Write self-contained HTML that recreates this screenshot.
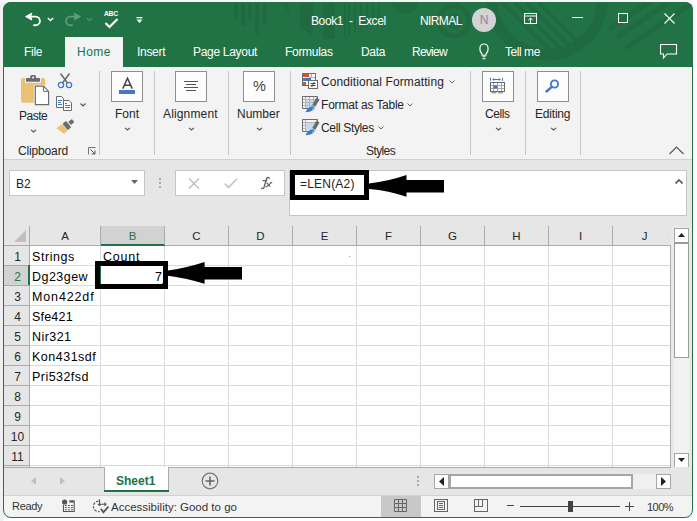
<!DOCTYPE html>
<html><head><meta charset="utf-8">
<style>
*{margin:0;padding:0;box-sizing:border-box}
html,body{width:697px;height:521px;overflow:hidden;background:#f1f1f1;font-family:"Liberation Sans",sans-serif;}
.a{position:absolute}
#win{position:absolute;left:3px;top:2px;width:690px;height:516px;border-radius:8px;overflow:hidden;background:#f3f3f3}
#wb{position:absolute;left:3px;top:2px;width:690px;height:516px;border:1px solid #217346;border-radius:8px}
#pg{position:absolute;left:-3px;top:-2px;width:697px;height:521px}
.t{position:absolute;white-space:nowrap;line-height:1}
.wt{color:#fff;font-size:12px;letter-spacing:-0.4px}
.tab{color:#fff;font-size:12px;letter-spacing:-0.3px}
.rl{font-size:12px;color:#262626}
.sep{position:absolute;width:1px;background:#c6c6c6}
.box{position:absolute;border:1px solid #8f8f8f;background:#fdfdfd}
.chev{position:absolute}
.gl{position:absolute;background:#e1e1e1}
.cell{position:absolute;font-size:12.5px;color:#000;line-height:1;white-space:nowrap}
.rh{position:absolute;left:5px;width:25px;font-size:12px;color:#262626;text-align:center;line-height:1}
.ch{position:absolute;top:231px;font-size:11.5px;color:#262626;text-align:center;line-height:1}
</style></head><body>
<div class="a" style="left:0;top:0;width:3px;height:521px;background:#f0f0f0"></div>
<div class="a" style="left:0;top:0;width:697px;height:2px;background:#f7f5f5"></div>
<div class="a" style="left:693px;top:0;width:4px;height:521px;background:#fff"></div>
<div class="a" style="left:3px;top:518px;width:694px;height:3px;background:#fff"></div>
<div id="win"><div id="pg">
 <!-- TITLE BAR -->
 <div class="a" style="left:0;top:0;width:697px;height:67px;background:#217346"></div>
 <svg class="a" style="left:0;top:0" width="697" height="67">
  <g fill="#1f6a41">
   <rect x="234" y="0" width="4" height="19"/><rect x="241" y="0" width="4" height="26"/><rect x="248" y="0" width="4" height="20"/><rect x="255" y="0" width="4" height="35"/><rect x="263" y="0" width="4" height="23"/>
   <path d="M281 0 H286 L290 15 Z"/>
   <path d="M300 0 H313 V36 L300 28 Z"/>
   <rect x="323" y="0" width="12" height="39"/>
   <rect x="344" y="0" width="2" height="38"/><rect x="348" y="0" width="2" height="36"/><rect x="354" y="0" width="2" height="34"/><rect x="360" y="0" width="2" height="32"/><rect x="366" y="0" width="2" height="28"/><rect x="372" y="0" width="2" height="24"/><rect x="378" y="0" width="2" height="20"/>
   <circle cx="405" cy="0" r="13.5"/>
  </g>
  <defs><clipPath id="rc"><circle cx="547" cy="0" r="50"/></clipPath></defs>
  <g fill="none" stroke="#1f6a41">
   <circle cx="454" cy="21" r="15" stroke-width="5"/>
   <circle cx="454" cy="21" r="6" stroke-width="4"/>
   <circle cx="547" cy="0" r="55" stroke-width="11"/>
   <g clip-path="url(#rc)"><path d="M490 -10 L560 60 M502 -10 L572 60 M514 -10 L584 60 M526 -10 L596 60" stroke-width="4"/></g>
   <path d="M692 3 L626 48 M672 0 L616 38 M655 -2 L608 30" stroke-width="5"/>
  </g>
 </svg>
 <!-- quick access -->
 <svg class="a" style="left:24px;top:12px" width="19" height="16" viewBox="0 0 19 16"><path d="M1.6 4.6 L7.8 1.2 L6.6 4.6 L7.8 8 Z" fill="#fff" stroke="#fff" stroke-width="1" stroke-linejoin="round"/><path d="M7 4.6 H11.6 A4.3 4.3 0 0 1 11.6 13.2 H10" fill="none" stroke="#fff" stroke-width="1.9" stroke-linecap="round"/></svg>
 <svg class="a" style="left:47px;top:17px" width="7" height="5"><path d="M0.8 1 L3.5 3.6 L6.2 1" fill="none" stroke="#fff" stroke-width="1.4"/></svg>
 <svg class="a" style="left:63px;top:12px" width="19" height="16" viewBox="0 0 19 16"><path d="M17.4 4.6 L11.2 1.2 L12.4 4.6 L11.2 8 Z" fill="#5e9d79" stroke="#5e9d79" stroke-width="1" stroke-linejoin="round"/><path d="M12 4.6 H7.4 A4.3 4.3 0 0 0 7.4 13.2 H9" fill="none" stroke="#5e9d79" stroke-width="1.9" stroke-linecap="round"/></svg>
 <svg class="a" style="left:86px;top:17px" width="7" height="5"><path d="M0.8 1 L3.5 3.6 L6.2 1" fill="none" stroke="#4f8e6a" stroke-width="1.4"/></svg>
 <div class="t" style="left:104px;top:11px;font-size:6.8px;font-weight:bold;color:#fff;letter-spacing:-0.3px">ABC</div>
 <svg class="a" style="left:104px;top:18px" width="15" height="11"><path d="M1.5 5 L5.5 9 L13.5 1" fill="none" stroke="#fff" stroke-width="2.2"/></svg>
 <svg class="a" style="left:136px;top:16px" width="7" height="8"><path d="M0.5 1.6 H6.5" stroke="#fff" stroke-width="1.2"/><path d="M0.5 3.6 H6.5 L3.5 7 Z" fill="#fff"/></svg>
 <div class="t wt" style="left:311px;top:15px">Book1 &nbsp;-&nbsp; Excel</div>
 <div class="t wt" style="left:420px;top:15px;letter-spacing:-0.6px">NIRMAL</div>
 <div class="a" style="left:472px;top:8px;width:24px;height:24px;border-radius:50%;background:#d3d3d3;color:#8a849c;font-size:12px;text-align:center;line-height:24px">N</div>
 <svg class="a" style="left:524px;top:13px" width="14" height="11"><rect x="0.5" y="0.5" width="12" height="10" fill="none" stroke="#fff" stroke-width="1"/><path d="M0.5 3 H12.5 M6.5 10.5 V5 M4.2 7.3 L6.5 5 L8.8 7.3" fill="none" stroke="#fff" stroke-width="1"/></svg>
 <div class="a" style="left:572px;top:17px;width:11px;height:1px;background:#fff"></div>
 <div class="a" style="left:618px;top:13px;width:10px;height:10px;border:1px solid #fff"></div>
 <svg class="a" style="left:664px;top:13px" width="11" height="11"><path d="M0.5 0.5 L10.5 10.5 M10.5 0.5 L0.5 10.5" stroke="#fff" stroke-width="1.1"/></svg>
 <!-- tabs -->
 <div class="a" style="left:65px;top:37px;width:58px;height:30px;background:#f3f3f3"></div>
 <div class="t tab" style="left:24px;top:46px">File</div>
 <div class="t tab" style="left:77px;top:46px;color:#217346;letter-spacing:0.5px">Home</div>
 <div class="t tab" style="left:137px;top:46px">Insert</div>
 <div class="t tab" style="left:193px;top:46px">Page Layout</div>
 <div class="t tab" style="left:285px;top:46px">Formulas</div>
 <div class="t tab" style="left:361px;top:46px">Data</div>
 <div class="t tab" style="left:412px;top:46px;letter-spacing:-0.75px">Review</div>
 <svg class="a" style="left:478px;top:43px" width="13" height="18"><path d="M4 10.8 C1.2 8.4 0.6 1 6 1 C11.4 1 10.8 8.4 8 10.8 V12.3 H4 Z M4.5 13.8 H7.5 M4.5 15.8 H7.5" fill="none" stroke="#fff" stroke-width="1.1"/></svg>
 <div class="t tab" style="left:505px;top:46px;letter-spacing:-0.45px">Tell me</div>
 <svg class="a" style="left:660px;top:44px" width="18" height="15"><path d="M0.5 0.5 H16.5 V10 H7 L3.5 14 V10 H0.5 Z" fill="none" stroke="#fff" stroke-width="1.1"/></svg>

 <!-- RIBBON -->
 <div class="a" style="left:0;top:67px;width:697px;height:92px;background:#f3f3f3"></div>

 <!-- Clipboard group -->
 <svg class="a" style="left:20px;top:74px" width="32" height="33" viewBox="0 0 32 33">
  <rect x="1" y="3.9" width="24.2" height="24.9" rx="2" fill="#e9c273"/>
  <rect x="5" y="3.5" width="16" height="5.3" fill="#f3f3f3"/>
  <rect x="6" y="4" width="14" height="3.8" rx="0.8" fill="#6c6c6c"/>
  <rect x="10.2" y="1" width="5.8" height="4" rx="1.6" fill="#6c6c6c"/>
  <circle cx="13.1" cy="3.6" r="1" fill="#fff"/>
  <path d="M13.8 10.8 H24 L30 16.8 V31.8 H13.8 Z" fill="#f3f3f3"/>
  <path d="M15.3 12.2 H23.4 L28.6 17.4 V30.6 H15.3 Z" fill="#fff" stroke="#6c6c6c" stroke-width="1.2"/>
  <path d="M23.4 12.2 V17.4 H28.6" fill="none" stroke="#6c6c6c" stroke-width="1"/>
 </svg>
 <div class="t rl" style="left:19px;top:110px;letter-spacing:-0.5px">Paste</div>
 <svg class="chev" style="left:30px;top:129px" width="7" height="4"><path d="M1 0.8 L3.5 3 L6 0.8" fill="none" stroke="#555" stroke-width="1.1"/></svg>
 <svg class="a" style="left:57px;top:73px" width="16" height="16" viewBox="0 0 16 16">
  <path d="M3.5 0.5 L10.5 10 M12.5 0.5 L5.5 10" stroke="#6c6c6c" stroke-width="1.6"/>
  <circle cx="4" cy="12" r="2.6" fill="none" stroke="#3d7bc4" stroke-width="1.3"/>
  <circle cx="12" cy="12" r="2.6" fill="none" stroke="#3d7bc4" stroke-width="1.3"/>
 </svg>
 <svg class="a" style="left:56px;top:96px" width="17" height="16" viewBox="0 0 17 16">
  <path d="M0.5 0.5 H5.5 L7.5 2.5 V11.5 H0.5 Z" fill="#fff" stroke="#6c6c6c" stroke-width="1"/>
  <path d="M2 4.5 H6 M2 6.5 H5 M2 8.5 H6" stroke="#3d7bc4" stroke-width="1"/>
  <path d="M7.5 4.5 H13 L15.5 7 V14.5 H7.5 Z" fill="#fff" stroke="#6c6c6c" stroke-width="1"/>
  <path d="M9 7.5 H11 M9 9.5 H14 M9 11.5 H14" stroke="#3d7bc4" stroke-width="1"/>
 </svg>
 <svg class="chev" style="left:80px;top:103px" width="6" height="4"><path d="M0.5 0.5 L3 3 L5.5 0.5" fill="none" stroke="#555" stroke-width="1.1"/></svg>
 <svg class="a" style="left:52px;top:114px" width="26" height="24" viewBox="0 0 26 24">
  <g transform="translate(15 11.4) rotate(-38)">
   <path d="M-10 -4.2 L-2.6 -4.2 L-2.6 4.2 L-7.5 5 Z" fill="#e9c273"/>
   <rect x="-2.4" y="-4.2" width="4.6" height="8.4" rx="1.2" fill="#6c6c6c"/>
   <rect x="3.2" y="-2" width="4.6" height="4" rx="0.9" fill="#6c6c6c"/>
  </g>
 </svg>
 <div class="t rl" style="left:18px;top:145px;letter-spacing:-0.15px">Clipboard</div>
 <svg class="a" style="left:88px;top:147px" width="8" height="8"><path d="M0.5 7.5 V0.5 H7.5" fill="none" stroke="#777" stroke-width="1"/><path d="M2.5 2.5 L7 7 M7 3.5 V7 H3.5" fill="none" stroke="#555" stroke-width="1"/></svg>
 <div class="sep" style="left:99px;top:71px;height:84px"></div>
 <!-- Font -->
 <div class="box" style="left:111px;top:71px;width:32px;height:31px"></div>
 <svg class="a" style="left:121px;top:77px" width="13" height="13"><path d="M1.8 11.6 L6.5 1.2 L11.2 11.6 M3.5 8.2 H9.5" fill="none" stroke="#444" stroke-width="1.5"/></svg>
 <div class="a" style="left:119px;top:90px;width:16px;height:4px;background:#4878b8"></div>
 <div class="t rl" style="left:115px;top:108px">Font</div>
 <svg class="chev" style="left:124px;top:127px" width="7" height="4"><path d="M1 0.8 L3.5 3 L6 0.8" fill="none" stroke="#555" stroke-width="1.1"/></svg>
 <div class="sep" style="left:154px;top:71px;height:84px"></div>
 <!-- Alignment -->
 <div class="box" style="left:175px;top:71px;width:32px;height:31px"></div>
 <svg class="a" style="left:184px;top:80px" width="15" height="12"><path d="M0 1.5 H14 M2 4.5 H12 M0 7.5 H14 M2 10.5 H12" stroke="#555" stroke-width="1"/></svg>
 <div class="t rl" style="left:163px;top:108px;letter-spacing:0.15px">Alignment</div>
 <svg class="chev" style="left:188px;top:127px" width="7" height="4"><path d="M1 0.8 L3.5 3 L6 0.8" fill="none" stroke="#555" stroke-width="1.1"/></svg>
 <div class="sep" style="left:228px;top:71px;height:84px"></div>
 <!-- Number -->
 <div class="box" style="left:243px;top:71px;width:32px;height:31px"></div>
 <div class="t" style="left:253px;top:79px;font-size:14.5px;color:#444">%</div>
 <div class="t rl" style="left:237px;top:108px">Number</div>
 <svg class="chev" style="left:256px;top:127px" width="7" height="4"><path d="M1 0.8 L3.5 3 L6 0.8" fill="none" stroke="#555" stroke-width="1.1"/></svg>
 <div class="sep" style="left:290px;top:71px;height:84px"></div>
 <!-- Styles -->
 <svg class="a" style="left:302px;top:73px" width="17" height="17" viewBox="0 0 17 17">
  <rect x="0.5" y="0.5" width="13" height="12" fill="#fff" stroke="#6c6c6c" stroke-width="1"/>
  <rect x="1" y="1" width="6" height="3" fill="#d9502f"/><rect x="1" y="5" width="8" height="3" fill="#3d7bc4"/><rect x="1" y="9" width="3" height="3" fill="#d9502f"/>
  <path d="M9.5 1 V4 M7 4.5 H13" stroke="#b0b0b0" stroke-width="1"/>
  <rect x="6.5" y="7.5" width="9" height="8" fill="#fff" stroke="#6c6c6c" stroke-width="1"/>
  <path d="M8.5 10.5 H13.5 M8.5 12.5 H13.5 M12.3 9 L9.7 14" stroke="#444" stroke-width="1"/>
 </svg>
 <div class="t rl" style="left:321px;top:76px;letter-spacing:0.1px">Conditional Formatting</div>
 <svg class="chev" style="left:449px;top:80px" width="6" height="4"><path d="M0.5 0.5 L3 3 L5.5 0.5" fill="none" stroke="#666" stroke-width="1"/></svg>
 <svg class="a" style="left:302px;top:96px" width="18" height="17" viewBox="0 0 18 17">
  <rect x="4" y="4" width="9" height="8" fill="#c5d9ef"/>
  <path d="M3.5 1 V12 M7.5 1 V12 M11.5 1 V10 M1 3.5 H15 M1 6.5 H13 M1 9.5 H12" stroke="#b4b4b4" stroke-width="1"/>
  <path d="M9 12.5 H0.5 V0.5 H15.5 V4" fill="none" stroke="#6c6c6c" stroke-width="1"/>
  <path d="M16 2.5 L11.8 9.8" stroke="#6c6c6c" stroke-width="3.6"/>
  <path d="M3.5 16.2 C5 12.8 8 10.4 10.8 10.3 L12.6 11.8 C12.2 14.2 8.5 16.2 3.5 16.2 Z" fill="#3d7bc4"/>
  <path d="M10.6 12 C11.2 12.5 11.2 13.2 10.8 13.6" fill="none" stroke="#fff" stroke-width="0.8"/>
 </svg>
 <div class="t rl" style="left:321px;top:99px;letter-spacing:-0.2px">Format as Table</div>
 <svg class="chev" style="left:407px;top:103px" width="6" height="4"><path d="M0.5 0.5 L3 3 L5.5 0.5" fill="none" stroke="#666" stroke-width="1"/></svg>
 <svg class="a" style="left:302px;top:119px" width="18" height="17" viewBox="0 0 18 17">
  <rect x="4" y="3.5" width="10" height="8" fill="#c5d9ef"/>
  <path d="M3.5 1 V12 M1 3.5 H15 M1 6.5 H3.5 M1 9.5 H3.5" stroke="#b4b4b4" stroke-width="1"/>
  <path d="M9 12.5 H0.5 V0.5 H15.5 V4" fill="none" stroke="#6c6c6c" stroke-width="1"/>
  <path d="M16 2.5 L11.8 9.8" stroke="#6c6c6c" stroke-width="3.6"/>
  <path d="M3.5 16.2 C5 12.8 8 10.4 10.8 10.3 L12.6 11.8 C12.2 14.2 8.5 16.2 3.5 16.2 Z" fill="#3d7bc4"/>
  <path d="M10.6 12 C11.2 12.5 11.2 13.2 10.8 13.6" fill="none" stroke="#fff" stroke-width="0.8"/>
 </svg>
 <div class="t rl" style="left:321px;top:122px;letter-spacing:-0.35px">Cell Styles</div>
 <svg class="chev" style="left:378px;top:126px" width="6" height="4"><path d="M0.5 0.5 L3 3 L5.5 0.5" fill="none" stroke="#666" stroke-width="1"/></svg>
 <div class="t rl" style="left:366px;top:145px;letter-spacing:-0.6px">Styles</div>
 <div class="sep" style="left:470px;top:71px;height:84px"></div>
 <!-- Cells -->
 <div class="box" style="left:482px;top:71px;width:32px;height:31px"></div>
 <svg class="a" style="left:489px;top:77px" width="17" height="18" viewBox="0 0 17 18">
  <path d="M1.5 0.8 V3.8 M13.5 0.8 V3.8 M3.8 2.5 H11.2" fill="none" stroke="#3d7bc4" stroke-width="1"/>
  <path d="M3.2 2.5 L5.2 0.9 V4.1 Z M11.8 2.5 L9.8 0.9 V4.1 Z" fill="#3d7bc4"/>
  <path d="M4.5 5.5 V14.5 M8.5 5.5 V14.5 M12.5 5.5 V14.5 M1.5 8.5 H15.5 M1.5 11.5 H15.5" stroke="#a8a8a8" stroke-width="1"/>
  <rect x="4.5" y="8.5" width="4" height="3" fill="#3d7bc4"/>
  <rect x="1.5" y="5.5" width="14" height="9" fill="none" stroke="#6c6c6c" stroke-width="1"/>
  <path d="M2.5 15.8 H7.5 M9 15.8 H14" stroke="#777" stroke-width="1"/>
 </svg>
 <div class="t rl" style="left:485px;top:108px;letter-spacing:-0.4px">Cells</div>
 <svg class="chev" style="left:495px;top:127px" width="7" height="4"><path d="M1 0.8 L3.5 3 L6 0.8" fill="none" stroke="#555" stroke-width="1.1"/></svg>
 <div class="sep" style="left:525px;top:71px;height:84px"></div>
 <!-- Editing -->
 <div class="box" style="left:537px;top:71px;width:32px;height:31px"></div>
 <svg class="a" style="left:545px;top:79px" width="15" height="14" viewBox="0 0 15 14">
  <circle cx="9.5" cy="5" r="3.6" fill="none" stroke="#3d7bc4" stroke-width="1.8"/>
  <path d="M6.8 7.8 L1.5 12.5" stroke="#3d7bc4" stroke-width="2.4" stroke-linecap="round"/>
 </svg>
 <div class="t rl" style="left:535px;top:108px;letter-spacing:-0.2px">Editing</div>
 <svg class="chev" style="left:550px;top:127px" width="7" height="4"><path d="M1 0.8 L3.5 3 L6 0.8" fill="none" stroke="#555" stroke-width="1.1"/></svg>
 <div class="sep" style="left:580px;top:71px;height:84px"></div>
 <svg class="a" style="left:669px;top:146px" width="15" height="9"><path d="M0.5 8 L7.5 1 L14.5 8" fill="none" stroke="#555" stroke-width="1.1"/></svg>

 <!-- FORMULA BAR -->
 <div class="a" style="left:0;top:159px;width:697px;height:308px;background:#e6e6e6"></div>
 <div class="a" style="left:0;top:159px;width:697px;height:1px;background:#d0d0d0"></div>
 <div class="a" style="left:9px;top:170px;width:136px;height:26px;background:#fff;border:1px solid #c6c6c6"></div>
 <div class="t" style="left:16px;top:178px;font-size:12px;color:#222">B2</div>
 <svg class="a" style="left:131px;top:180px" width="7" height="4"><path d="M0 0 H7 L3.5 4 Z" fill="#666"/></svg>
 <div class="a" style="left:159px;top:178px;width:2px;height:2px;background:#aaa"></div>
 <div class="a" style="left:159px;top:182px;width:2px;height:2px;background:#aaa"></div>
 <div class="a" style="left:159px;top:186px;width:2px;height:2px;background:#aaa"></div>
 <div class="a" style="left:175px;top:170px;width:110px;height:26px;background:#fff;border:1px solid #c6c6c6"></div>
 <svg class="a" style="left:188px;top:178px" width="12" height="11"><path d="M1 0.5 L11 10.5 M11 0.5 L1 10.5" stroke="#bdbdbd" stroke-width="1.3"/></svg>
 <svg class="a" style="left:224px;top:178px" width="14" height="11"><path d="M0.8 5.5 L4.5 9.5 L13 0.8" fill="none" stroke="#c4c4c4" stroke-width="1.6"/></svg>
 <svg class="a" style="left:258px;top:174px" width="16" height="18" viewBox="0 0 16 18"><path d="M11.2 4.3 C10.8 3.2 9.2 3.2 8.6 4.6 L6.2 12.8 C5.8 14.4 4.6 15 3.6 14.2" fill="none" stroke="#666" stroke-width="1.4" stroke-linecap="round"/><path d="M4.6 6.6 H9.4" stroke="#666" stroke-width="1.1"/><path d="M8.6 8.6 L12.4 12.6 M13.2 8.6 L8.6 12.6 M7.6 12.6 H9.6 M12.2 8.6 H14.2" stroke="#666" stroke-width="1.2"/></svg>
 <div class="a" style="left:289px;top:170px;width:398px;height:46px;background:#fff;border:1px solid #c6c6c6"></div>
 <div class="t" style="left:300px;top:178px;font-size:12px;color:#222;letter-spacing:0.2px">=LEN(A2)</div>
 <svg class="a" style="left:675px;top:179px" width="8" height="5"><path d="M0.5 4.5 L4 1 L7.5 4.5" fill="none" stroke="#555" stroke-width="1.6"/></svg>
 <div class="a" style="left:290px;top:170px;width:79px;height:30px;border:5px solid #000"></div>
 <svg class="a" style="left:360px;top:165px" width="90" height="40"><path d="M9 18.6 Q29 16 46.5 10 V15 H84 V27.5 H46.5 V31.8 Q29 25.5 9 23.9 Z" fill="#000"/></svg>

 <!-- GRID -->
 <div class="a" style="left:4px;top:226px;width:667px;height:19px;background:#e6e6e6"></div>
 <svg class="a" style="left:14px;top:230px" width="12" height="12"><path d="M12 0 V12 H0 Z" fill="#c0c0c0"/></svg>
 <div class="a" style="left:4px;top:245px;width:667px;height:1px;background:#ababab"></div>
 <div class="a" style="left:29px;top:226px;width:1px;height:241px;background:#ababab"></div>
 <div class="a" style="left:30px;top:246px;width:641px;height:221px;background:#fff"></div>
 <div class="a" style="left:4px;top:246px;width:25px;height:221px;background:#e6e6e6"></div>
 <div class="ch" style="left:30px;width:70px;">A</div>
 <div class="a" style="left:100px;top:226px;width:1px;height:19px;background:#ababab"></div>
 <div class="gl" style="left:100px;top:246px;width:1px;height:221px;background:#d9d9d9"></div>
 <div class="a" style="left:101px;top:226px;width:63px;height:19px;background:#d2d2d2"></div>
 <div class="a" style="left:101px;top:244px;width:64px;height:2px;background:#217346"></div>
 <div class="ch" style="left:101px;width:63px;color:#217346">B</div>
 <div class="a" style="left:164px;top:226px;width:1px;height:19px;background:#ababab"></div>
 <div class="gl" style="left:164px;top:246px;width:1px;height:221px;background:#d9d9d9"></div>
 <div class="ch" style="left:165px;width:63px;">C</div>
 <div class="a" style="left:228px;top:226px;width:1px;height:19px;background:#ababab"></div>
 <div class="gl" style="left:228px;top:246px;width:1px;height:221px;background:#d9d9d9"></div>
 <div class="ch" style="left:229px;width:63px;">D</div>
 <div class="a" style="left:292px;top:226px;width:1px;height:19px;background:#ababab"></div>
 <div class="gl" style="left:292px;top:246px;width:1px;height:221px;background:#d9d9d9"></div>
 <div class="ch" style="left:293px;width:63px;">E</div>
 <div class="a" style="left:356px;top:226px;width:1px;height:19px;background:#ababab"></div>
 <div class="gl" style="left:356px;top:246px;width:1px;height:221px;background:#d9d9d9"></div>
 <div class="ch" style="left:357px;width:63px;">F</div>
 <div class="a" style="left:420px;top:226px;width:1px;height:19px;background:#ababab"></div>
 <div class="gl" style="left:420px;top:246px;width:1px;height:221px;background:#d9d9d9"></div>
 <div class="ch" style="left:421px;width:63px;">G</div>
 <div class="a" style="left:484px;top:226px;width:1px;height:19px;background:#ababab"></div>
 <div class="gl" style="left:484px;top:246px;width:1px;height:221px;background:#d9d9d9"></div>
 <div class="ch" style="left:485px;width:63px;">H</div>
 <div class="a" style="left:548px;top:226px;width:1px;height:19px;background:#ababab"></div>
 <div class="gl" style="left:548px;top:246px;width:1px;height:221px;background:#d9d9d9"></div>
 <div class="ch" style="left:549px;width:63px;">I</div>
 <div class="a" style="left:612px;top:226px;width:1px;height:19px;background:#ababab"></div>
 <div class="gl" style="left:612px;top:246px;width:1px;height:221px;background:#d9d9d9"></div>
 <div class="ch" style="left:616px;width:57px;">J</div>
 <div class="rh" style="top:251px;">1</div>
 <div class="a" style="left:4px;top:265px;width:25px;height:1px;background:#ababab"></div>
 <div class="gl" style="left:30px;top:265px;width:640px;height:1px;background:#d9d9d9"></div>
 <div class="a" style="left:4px;top:266px;width:25px;height:19px;background:#d2d2d2"></div>
 <div class="rh" style="top:271px;color:#217346">2</div>
 <div class="a" style="left:4px;top:285px;width:25px;height:1px;background:#ababab"></div>
 <div class="gl" style="left:30px;top:285px;width:640px;height:1px;background:#d9d9d9"></div>
 <div class="rh" style="top:291px;">3</div>
 <div class="a" style="left:4px;top:305px;width:25px;height:1px;background:#ababab"></div>
 <div class="gl" style="left:30px;top:305px;width:640px;height:1px;background:#d9d9d9"></div>
 <div class="rh" style="top:311px;">4</div>
 <div class="a" style="left:4px;top:325px;width:25px;height:1px;background:#ababab"></div>
 <div class="gl" style="left:30px;top:325px;width:640px;height:1px;background:#d9d9d9"></div>
 <div class="rh" style="top:331px;">5</div>
 <div class="a" style="left:4px;top:345px;width:25px;height:1px;background:#ababab"></div>
 <div class="gl" style="left:30px;top:345px;width:640px;height:1px;background:#d9d9d9"></div>
 <div class="rh" style="top:351px;">6</div>
 <div class="a" style="left:4px;top:365px;width:25px;height:1px;background:#ababab"></div>
 <div class="gl" style="left:30px;top:365px;width:640px;height:1px;background:#d9d9d9"></div>
 <div class="rh" style="top:371px;">7</div>
 <div class="a" style="left:4px;top:385px;width:25px;height:1px;background:#ababab"></div>
 <div class="gl" style="left:30px;top:385px;width:640px;height:1px;background:#d9d9d9"></div>
 <div class="rh" style="top:391px;">8</div>
 <div class="a" style="left:4px;top:405px;width:25px;height:1px;background:#ababab"></div>
 <div class="gl" style="left:30px;top:405px;width:640px;height:1px;background:#d9d9d9"></div>
 <div class="rh" style="top:411px;">9</div>
 <div class="a" style="left:4px;top:425px;width:25px;height:1px;background:#ababab"></div>
 <div class="gl" style="left:30px;top:425px;width:640px;height:1px;background:#d9d9d9"></div>
 <div class="rh" style="top:431px;">10</div>
 <div class="a" style="left:4px;top:445px;width:25px;height:1px;background:#ababab"></div>
 <div class="gl" style="left:30px;top:445px;width:640px;height:1px;background:#d9d9d9"></div>
 <div class="rh" style="top:451px;">11</div>
 <div class="a" style="left:4px;top:465px;width:25px;height:1px;background:#ababab"></div>
 <div class="gl" style="left:30px;top:465px;width:640px;height:1px;background:#d9d9d9"></div>
 <div class="a" style="left:28px;top:265px;width:2px;height:20px;background:#217346"></div>
 <div class="a" style="left:670px;top:245px;width:1px;height:222px;background:#ababab"></div>
 <div class="cell" style="left:32px;top:251px;letter-spacing:0.57px">Strings</div>
 <div class="cell" style="left:32px;top:271px;letter-spacing:0.47px">Dg23gew</div>
 <div class="cell" style="left:32px;top:291px;letter-spacing:0.86px">Mon422df</div>
 <div class="cell" style="left:32px;top:311px;letter-spacing:0.2px">Sfe421</div>
 <div class="cell" style="left:32px;top:331px;letter-spacing:0.45px">Nir321</div>
 <div class="cell" style="left:32px;top:351px;letter-spacing:0.5px">Kon431sdf</div>
 <div class="cell" style="left:32px;top:371px;letter-spacing:0.45px">Pri532fsd</div>
 <div class="cell" style="left:103px;top:251px;letter-spacing:0.75px">Count</div>
 <div class="cell" style="left:155px;top:271px">7</div>
 <div class="a" style="left:349px;top:256px;width:1px;height:1px;background:#999"></div>
 <div class="a" style="left:100px;top:266px;width:1px;height:18px;background:#217346"></div>
 <div class="a" style="left:162px;top:283px;width:2px;height:2px;background:#217346"></div>
 <div class="a" style="left:95px;top:261px;width:73px;height:28px;border:5px solid #000"></div>
 <svg class="a" style="left:160px;top:255px" width="90" height="40"><path d="M8 15.4 Q27 12.8 44.6 7 V12 H82 V24.5 H44.6 V28.8 Q27 23.2 8 20.7 Z" fill="#000"/></svg>
 <div class="a" style="left:671px;top:226px;width:21px;height:241px;background:#e9e9e9"></div>
 <div class="a" style="left:674px;top:228px;width:15px;height:15px;background:#fff;border:1px solid #a6a6a6"></div>
 <svg class="a" style="left:678px;top:233px" width="7" height="4"><path d="M0 4 L3.5 0 L7 4 Z" fill="#222"/></svg>
 <div class="a" style="left:674px;top:243px;width:15px;height:210px;background:#f2f2f2"></div>
 <div class="a" style="left:674px;top:242px;width:15px;height:116px;background:#fff;border:1px solid #9c9c9c;border-top-width:2px"></div>
 <div class="a" style="left:674px;top:453px;width:15px;height:15px;background:#fff;border:1px solid #a6a6a6"></div>
 <svg class="a" style="left:678px;top:458px" width="7" height="4"><path d="M0 0 L3.5 4 L7 0 Z" fill="#222"/></svg>

 <!-- SHEET TABS -->
 <div class="a" style="left:0;top:467px;width:697px;height:28px;background:#e6e6e6"></div>
 <div class="a" style="left:4px;top:467px;width:667px;height:1px;background:#ababab"></div>
 <svg class="a" style="left:31px;top:477px" width="5" height="8"><path d="M5 0 V8 L0 4 Z" fill="#c0c0c0"/></svg>
 <svg class="a" style="left:60px;top:477px" width="5" height="8"><path d="M0 0 V8 L5 4 Z" fill="#c0c0c0"/></svg>
 <div class="a" style="left:104px;top:467px;width:65px;height:25px;background:#fff;border-left:1px solid #ababab;border-right:1px solid #ababab"></div>
 <div class="a" style="left:104px;top:490px;width:65px;height:2px;background:#217346"></div>
 <div class="t" style="left:116px;top:475px;font-size:12px;font-weight:bold;color:#217346">Sheet1</div>
 <svg class="a" style="left:201px;top:472px" width="18" height="18"><circle cx="9" cy="9" r="7.8" fill="none" stroke="#777" stroke-width="1.2"/><path d="M9 4.5 V13.5 M4.5 9 H13.5" stroke="#666" stroke-width="1.6"/></svg>
 <div class="a" style="left:417px;top:476px;width:2px;height:2px;background:#aaa"></div>
 <div class="a" style="left:417px;top:480px;width:2px;height:2px;background:#aaa"></div>
 <div class="a" style="left:417px;top:484px;width:2px;height:2px;background:#aaa"></div>
 <div class="a" style="left:434px;top:474px;width:237px;height:15px;background:#f0f0f0"></div>
 <div class="a" style="left:434px;top:474px;width:15px;height:15px;background:#fff;border:1px solid #a6a6a6"></div>
 <svg class="a" style="left:439px;top:477px" width="5" height="9"><path d="M5 0 V9 L0 4.5 Z" fill="#222"/></svg>
 <div class="a" style="left:449px;top:474px;width:184px;height:15px;background:#fff;border:2px solid #a6a6a6"></div>
 <div class="a" style="left:656px;top:474px;width:15px;height:15px;background:#fff;border:1px solid #a6a6a6"></div>
 <svg class="a" style="left:661px;top:477px" width="5" height="9"><path d="M0 0 V9 L5 4.5 Z" fill="#222"/></svg>

 <!-- STATUS BAR -->
 <div class="a" style="left:0;top:495px;width:697px;height:26px;background:#f3f3f3"></div>
 <div class="a" style="left:0;top:495px;width:697px;height:1px;background:#d2d2d2"></div>
 <div class="t" style="left:12px;top:501px;font-size:11px;color:#333;letter-spacing:-0.3px">Ready</div>
 <svg class="a" style="left:60px;top:498px" width="16" height="16" viewBox="0 0 16 16"><circle cx="4.6" cy="4" r="2.6" fill="#555"/><rect x="9.4" y="2.3" width="5.3" height="2.3" fill="#555"/><path d="M3.5 6.8 V13.5 H14.2 V4.5" fill="none" stroke="#555" stroke-width="1.1"/><path d="M5 7.5 h1.8 M8 7.5 h1.8 M11 7.5 h1.8 M5 9.6 h1.8 M8 9.6 h1.8 M11 9.6 h1.8 M5 11.8 h1.8 M8 11.8 h1.8 M11 11.8 h1.8" stroke="#555" stroke-width="1"/></svg>
 <svg class="a" style="left:92px;top:498px" width="18" height="17" viewBox="0 0 18 17"><path d="M6.5 3.2 A5.2 5.2 0 1 0 7.6 13.5" fill="none" stroke="#555" stroke-width="1.2" stroke-dasharray="2.4 1.4"/><path d="M7.5 1.2 V7.4 M5.9 5.8 L7.5 7.4 L9.1 5.8 M9 6.2 H14 M12.4 4.6 L14 6.2 L12.4 7.8" fill="none" stroke="#555" stroke-width="1.1"/><path d="M8.8 10.8 L11.4 14.4 L16.4 8.6" fill="none" stroke="#555" stroke-width="1.8"/></svg>
 <div class="t" style="left:111px;top:502px;font-size:11.5px;color:#333;letter-spacing:0px">Accessibility: Good to go</div>
 <div class="a" style="left:381px;top:496px;width:40px;height:21px;background:#c8c8c8"></div>
 <svg class="a" style="left:394px;top:499px" width="13" height="13"><path d="M0.5 0.5 H12.5 V12.5 H0.5 Z M0.5 4.5 H12.5 M0.5 8.5 H12.5 M4.5 0.5 V12.5 M8.5 0.5 V12.5" fill="none" stroke="#666" stroke-width="1"/></svg>
 <svg class="a" style="left:434px;top:499px" width="14" height="13"><rect x="0.5" y="0.5" width="13" height="12" fill="none" stroke="#666"/><rect x="3.5" y="2.5" width="7" height="8" fill="none" stroke="#666"/><path d="M5 4.5 H9 M5 6.5 H9 M5 8.5 H9" stroke="#666"/></svg>
 <svg class="a" style="left:474px;top:499px" width="14" height="13"><rect x="0.5" y="0.5" width="13" height="12" fill="none" stroke="#666"/><path d="M4.5 0.5 V7.5 M8.5 0.5 V7.5 M0.5 7.5 H9" fill="none" stroke="#666"/></svg>
 <div class="a" style="left:507px;top:505px;width:7px;height:1px;background:#444"></div>
 <div class="a" style="left:520px;top:506px;width:100px;height:1px;background:#444"></div>
 <div class="a" style="left:568px;top:501px;width:5px;height:11px;background:#444"></div>
 <svg class="a" style="left:625px;top:502px" width="9" height="9"><path d="M4.5 0 V9 M0 4.5 H9" stroke="#444" stroke-width="1"/></svg>
 <div class="t" style="left:647px;top:502px;font-size:11px;color:#333;letter-spacing:-0.5px">100%</div>
</div></div>
<div id="wb"></div>
</body></html>
